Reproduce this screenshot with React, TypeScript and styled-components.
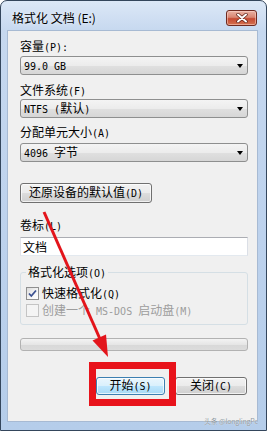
import React from 'react';
import styled, { createGlobalStyle } from 'styled-components';

const GlobalStyle = createGlobalStyle`
  html, body {
    margin: 0;
    padding: 0;
    background: #ffffff;
  }
  body {
    font-family: 'Noto Sans CJK SC', 'Noto Sans', sans-serif;
    font-size: 12px;
    color: #000000;
  }
`;

const Screen = styled.div`
  position: relative;
  width: 267px;
  height: 431px;
  overflow: hidden;
`;

const Window = styled.div`
  box-sizing: border-box;
  width: 267px;
  height: 431px;
  display: flex;
  flex-direction: column;
  border: 1px solid #34465c;
  border-radius: 7px 7px 0 0;
  background: linear-gradient(180deg, #dce8f7 0%, #c6d8ef 7%, #bdd2ed 55%, #b5cdea 100%);
  padding: 0 8px 8px 6px;
`;

const TitleBar = styled.div`
  box-sizing: border-box;
  height: 29px;
  display: flex;
  align-items: flex-start;
  padding-top: 9px;
`;

const Title = styled.div`
  padding-left: 5px;
  font-size: 12px;
  line-height: 16px;
  color: #000000;
  text-shadow: 0 0 4px rgba(255, 255, 255, 0.9);
`;

const CloseButton = styled.div`
  box-sizing: border-box;
  margin-left: auto;
  margin-right: 1px;
  width: 31px;
  height: 16px;
  border: 1px solid #6e2a20;
  border-radius: 3px;
  background: linear-gradient(180deg, #eab2a4 0%, #d98672 45%, #c54a32 55%, #d4714f 100%);
  box-shadow: inset 0 0 0 1px rgba(255, 220, 210, 0.5);
  display: flex;
  align-items: center;
  justify-content: center;
`;

const Client = styled.div`
  flex: 1;
  display: flex;
  flex-direction: column;
  background: #f0f0f0;
  border: 1px solid #a7bad3;
  padding: 7px 9px 0 12px;
`;

const Lat = styled.span`
  font-family: 'DejaVu Sans Mono', 'Liberation Mono', monospace;
  font-size: 10px;
  white-space: pre;
`;

const Text = styled.span`
  white-space: nowrap;
`;

const Label = styled.div<{ $top?: number }>`
  height: 16px;
  line-height: 16px;
  margin-top: ${({ $top = 0 }) => $top}px;
  white-space: nowrap;
`;

const Combo = styled.div<{ $top?: number }>`
  box-sizing: border-box;
  height: 19px;
  margin-top: ${({ $top = 0 }) => $top}px;
  display: flex;
  align-items: center;
  padding: 0 4px 0 3px;
  border: 1px solid #8e8f8f;
  border-radius: 3px;
  background: linear-gradient(180deg, #f4f4f4 0%, #ececec 50%, #e0e0e0 51%, #d6d6d6 100%);
  line-height: 16px;
  white-space: nowrap;
`;

const DropArrow = styled.span`
  margin-left: auto;
  width: 0;
  height: 0;
  border-left: 3.5px solid transparent;
  border-right: 3.5px solid transparent;
  border-top: 4px solid #000000;
`;

const PushButton = styled.div<{ $width: number; $top?: number; $default?: boolean }>`
  box-sizing: border-box;
  width: ${({ $width }) => $width}px;
  height: ${({ $default }) => ($default !== undefined ? 18 : 20)}px;
  margin-top: ${({ $top = 0 }) => $top}px;
  display: flex;
  align-items: center;
  justify-content: center;
  border: 1px solid ${({ $default }) => ($default ? '#3c7fb1' : '#707070')};
  border-radius: 3px;
  background: ${({ $default }) =>
    $default
      ? 'linear-gradient(180deg, #eaf6fd 0%, #d9f0fc 50%, #bee6fd 51%, #a7d9f5 100%)'
      : 'linear-gradient(180deg, #f2f2f2 0%, #ebebeb 50%, #dddddd 51%, #cfcfcf 100%)'};
  box-shadow: inset 0 0 0 1px rgba(255, 255, 255, 0.7);
  line-height: 16px;
  white-space: nowrap;
`;

const TextInput = styled.div`
  box-sizing: border-box;
  height: 19px;
  margin-top: 4px;
  padding-left: 2px;
  display: flex;
  align-items: center;
  background: #ffffff;
  border: 1px solid;
  border-color: #abadb3 #dbdfe6 #e3e9ef #e2e3ea;
  line-height: 16px;
`;

const GroupBox = styled.fieldset`
  margin: 8px 0 0;
  padding: 0 5px 5px;
  border: 1px solid #d5dfe5;
  border-radius: 3px;
  min-inline-size: 0;
`;

const GroupLegend = styled.legend`
  padding: 0 2px;
  height: 16px;
  line-height: 16px;
  white-space: nowrap;
`;

const CheckList = styled.div`
  display: flex;
  flex-direction: column;
  padding-top: 5px;
`;

const CheckRow = styled.div<{ $disabled?: boolean }>`
  height: 17px;
  display: flex;
  align-items: center;
  gap: 3px;
  line-height: 16px;
  white-space: nowrap;
  color: ${({ $disabled }) => ($disabled ? '#9d9d9d' : '#000000')};
`;

const CheckBox = styled.span<{ $disabled?: boolean }>`
  box-sizing: border-box;
  width: 13px;
  height: 13px;
  flex: none;
  display: flex;
  align-items: center;
  justify-content: center;
  border: 1px solid ${({ $disabled }) => ($disabled ? '#c4c4c4' : '#8f8f8f')};
  background: ${({ $disabled }) =>
    $disabled ? '#f4f4f4' : 'linear-gradient(135deg, #dcdcdc 0%, #f6f6f6 60%, #ffffff 100%)'};
`;

const Progress = styled.div`
  box-sizing: border-box;
  height: 13px;
  margin-top: 13px;
  border: 1px solid #b2b2b2;
  border-radius: 3px;
  background: linear-gradient(180deg, #f3f3f3 0%, #e6e6e6 50%, #d8d8d8 51%, #dcdcdc 100%);
`;

const ButtonRow = styled.div`
  margin-top: 26px;
  padding-right: 1px;
  display: flex;
  justify-content: flex-end;
  gap: 10px;
`;

const Annotation = styled.svg`
  position: absolute;
  left: 0;
  top: 0;
  pointer-events: none;
`;

const Watermark = styled.div`
  position: absolute;
  left: 204px;
  top: 417px;
  font-family: 'Noto Sans CJK SC', sans-serif;
  font-size: 7px;
  line-height: 9px;
  letter-spacing: -0.2px;
  color: #8e989f;
  text-shadow: 0 0 1px #ffffff;
  white-space: nowrap;
`;

export default function App() {
  return (
    <Screen>
      <GlobalStyle />
      <Window>
        <TitleBar>
          <Title>格式化 文档 (E:)</Title>
          <CloseButton>
            <svg width="12" height="10" viewBox="0 0 12 10">
              <path d="M2 1.5 L10 8.5 M10 1.5 L2 8.5" stroke="#5a2016" strokeWidth="3.4" strokeLinecap="round" />
              <path d="M2 1.5 L10 8.5 M10 1.5 L2 8.5" stroke="#ffffff" strokeWidth="2" strokeLinecap="round" />
            </svg>
          </CloseButton>
        </TitleBar>
        <Client>
          <Label>
            容量<Lat>(P):</Lat>
          </Label>
          <Combo $top={2}>
            <Text>
              <Lat>99.0 GB</Lat>
            </Text>
            <DropArrow />
          </Combo>
          <Label $top={7}>
            文件系统<Lat>(F)</Lat>
          </Label>
          <Combo $top={1}>
            <Text>
              <Lat>NTFS (</Lat>默认<Lat>)</Lat>
            </Text>
            <DropArrow />
          </Combo>
          <Label $top={6}>
            分配单元大小<Lat>(A)</Lat>
          </Label>
          <Combo $top={3}>
            <Text>
              <Lat>{'4096 '}</Lat>字节
            </Text>
            <DropArrow />
          </Combo>
          <PushButton $width={132} $top={21}>
            <Text>
              还原设备的默认值<Lat>(D)</Lat>
            </Text>
          </PushButton>
          <Label $top={14}>
            卷标<Lat>(L)</Lat>
          </Label>
          <TextInput>文档</TextInput>
          <GroupBox>
            <GroupLegend>
              格式化选项<Lat>(O)</Lat>
            </GroupLegend>
            <CheckList>
              <CheckRow>
                <CheckBox>
                  <svg width="11" height="11" viewBox="0 0 11 11">
                    <path d="M2 5.5 L4.3 8 L9 2.5" fill="none" stroke="#3b5190" strokeWidth="1.8" />
                  </svg>
                </CheckBox>
                <Text>
                  快速格式化<Lat>(Q)</Lat>
                </Text>
              </CheckRow>
              <CheckRow $disabled>
                <CheckBox $disabled />
                <Text>
                  创建一个<Lat>{' MS-DOS '}</Lat>启动盘<Lat>(M)</Lat>
                </Text>
              </CheckRow>
            </CheckList>
          </GroupBox>
          <Progress />
          <ButtonRow>
            <PushButton $width={69} $default>
              <Text>
                开始<Lat>(S)</Lat>
              </Text>
            </PushButton>
            <PushButton $width={72} $default={false}>
              <Text>
                关闭<Lat>(C)</Lat>
              </Text>
            </PushButton>
          </ButtonRow>
        </Client>
      </Window>
      <Annotation width="267" height="431" viewBox="0 0 267 431">
        <line x1="44" y1="212" x2="100" y2="339" stroke="#e3141b" strokeWidth="3" />
        <polygon points="108,357 92.5,340.5 106,334.5" fill="#e3141b" />
        <rect x="92.5" y="365.5" width="80" height="37" fill="none" stroke="#e8131b" strokeWidth="7" />
      </Annotation>
      <Watermark>头条 @longlingPc</Watermark>
    </Screen>
  );
}
